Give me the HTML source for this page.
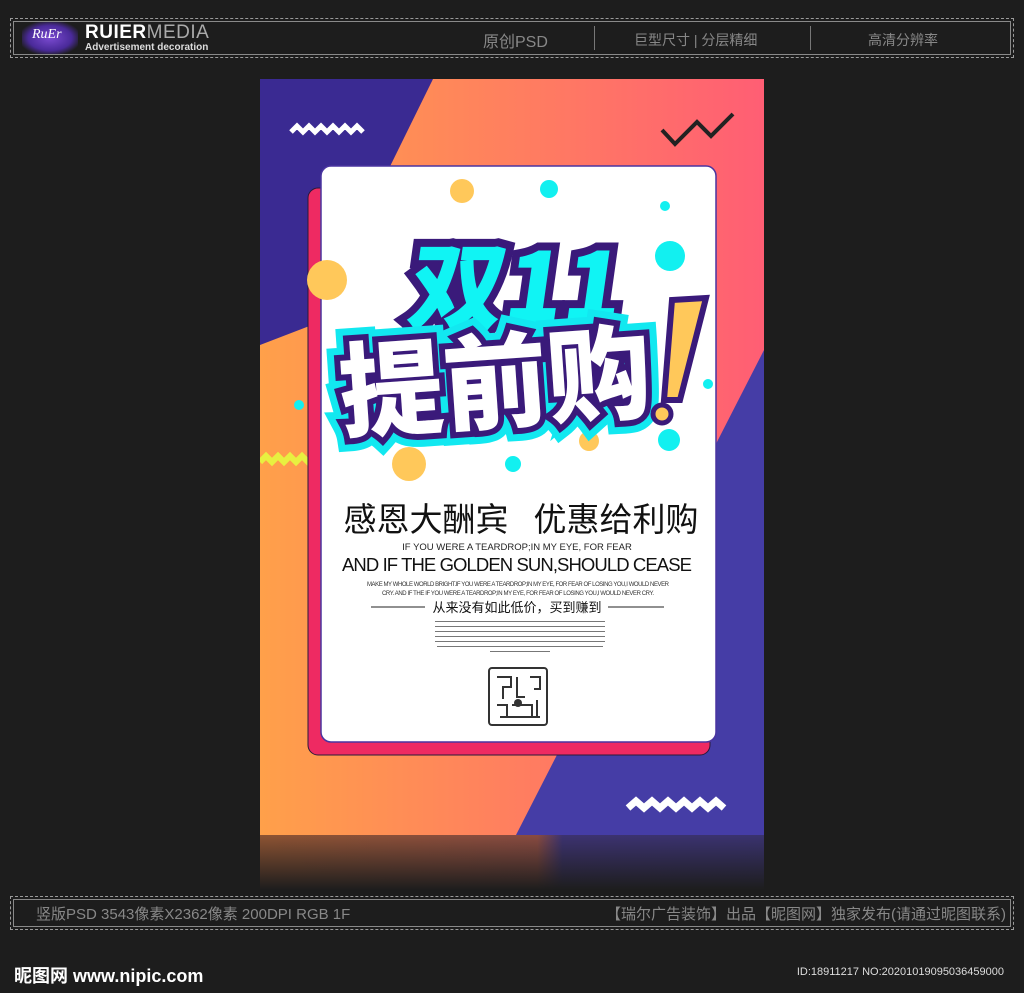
<!DOCTYPE html>
<html><head><meta charset="utf-8"><style>
*{margin:0;padding:0;box-sizing:border-box}
body{width:1024px;height:993px;background:#1d1d1d;position:relative;overflow:hidden;font-family:"Liberation Sans","Noto Sans CJK SC",sans-serif}
.bar{position:absolute;left:10px;width:1004px;border:1px dashed #9a9a9a}
.bar .in{position:absolute;inset:2px;border:1px solid #8a8a8a}
.abs{position:absolute}
</style></head><body>
<div class="bar" style="top:18px;height:40px"><div class="in"></div></div>
<div class="abs" style="left:22px;top:22px;width:56px;height:32px;background:radial-gradient(ellipse at 50% 50%,#7a4ad0 0%,#4a2a9a 55%,#1d1d1d 80%);border-radius:8px"></div>
<div class="abs" style="left:32px;top:27px;color:#fff;font:italic 14px 'Liberation Serif',serif">RuEr</div>
<div class="abs" style="left:85px;top:22px;color:#fff;font:bold 19px 'Liberation Sans',sans-serif;letter-spacing:0.5px">RUIER<span style="font-weight:normal;color:#aaa">MEDIA</span></div>
<div class="abs" style="left:85px;top:42px;color:#ddd;font:bold 10px 'Liberation Sans',sans-serif">Advertisement decoration</div>
<div class="abs" style="left:483px;top:28px;color:#888;font-size:16px">原创PSD</div>
<div class="abs" style="left:594px;top:26px;width:1px;height:24px;background:#777"></div>
<div class="abs" style="left:634px;top:30px;color:#888;font-size:14px">巨型尺寸 | 分层精细</div>
<div class="abs" style="left:810px;top:26px;width:1px;height:24px;background:#777"></div>
<div class="abs" style="left:868px;top:30px;color:#888;font-size:14px">高清分辨率</div>

<!-- reflection -->
<div class="abs" style="left:260px;top:835px;width:504px;height:55px;background:linear-gradient(90deg,#9a5a35,#955045 55%,#40357a 60%,#3d3578)"></div>
<div class="abs" style="left:260px;top:835px;width:504px;height:55px;background:linear-gradient(180deg,rgba(29,29,29,0.1),#1d1d1d)"></div>

<svg class="abs" style="left:260px;top:79px" width="504" height="756" viewBox="260 79 504 756">
<defs><linearGradient id="g" x1="0" x2="1" y1="0" y2="0"><stop offset="0" stop-color="#ffa04a"/><stop offset="1" stop-color="#ff5e74"/></linearGradient></defs>
<rect x="260" y="79" width="504" height="756" fill="url(#g)"/>
<polygon points="260,79 433,79 312,325 260,345" fill="#3a2a92"/>
<polygon points="764,350 764,835 516,835" fill="#453da6"/>
<path d="M291 132 l6-6 6 6 6-6 6 6 6-6 6 6 6-6 6 6 6-6 6 6 6-6 6 6" stroke="#fff" stroke-width="5" fill="none"/>
<path d="M628 808 l8-7 8 7 8-7 8 7 8-7 8 7 8-7 8 7 8-7 8 7 8-7 8 7" stroke="#fff" stroke-width="7" fill="none"/>
<path d="M662 130 l13 14 22-22 14 14 22-22" stroke="#222" stroke-width="4" fill="none"/>
<path d="M260 462 l6-6 6 6 6-6 6 6 6-6 6 6 6-6 6 6 6-6 6 6" stroke="#e8f040" stroke-width="6" fill="none"/>
<rect x="308" y="188" width="402" height="567" rx="10" fill="#ee2a62" stroke="#2a1a3a" stroke-width="1"/>
<rect x="321" y="166" width="395" height="576" rx="10" fill="#fff" stroke="#4a35a0" stroke-width="1.5"/>
<circle cx="462" cy="191" r="12" fill="#ffc85a"/><circle cx="549" cy="189" r="9" fill="#12f0f0"/>
<circle cx="665" cy="206" r="5" fill="#12f0f0"/><circle cx="670" cy="256" r="15" fill="#12f0f0"/>
<circle cx="327" cy="280" r="20" fill="#ffc85a"/><circle cx="299" cy="405" r="5" fill="#12f0f0"/>
<circle cx="708" cy="384" r="5" fill="#12f0f0"/><circle cx="669" cy="440" r="11" fill="#12f0f0"/>
<circle cx="589" cy="441" r="10" fill="#ffc85a"/><circle cx="409" cy="464" r="17" fill="#ffc85a"/>
<circle cx="513" cy="464" r="8" fill="#12f0f0"/>
<text x="515" y="322" text-anchor="middle" font-family="Noto Sans CJK SC,sans-serif" font-weight="900" font-size="96" fill="#10f4f4" stroke="#3a1a7a" stroke-width="16" paint-order="stroke" transform="skewX(-8) translate(42 0)">双11</text>
<text x="495" y="420" text-anchor="middle" font-family="Noto Sans CJK SC,sans-serif" font-weight="900" font-size="104" fill="#fff" stroke="#12e8f0" stroke-width="26" paint-order="stroke" transform="rotate(-4 495 380)">提前购</text>
<text x="495" y="420" text-anchor="middle" font-family="Noto Sans CJK SC,sans-serif" font-weight="900" font-size="104" fill="#fff" stroke="#3a1a7a" stroke-width="12" paint-order="stroke" transform="rotate(-4 495 380)">提前购</text>
<polygon points="672,300 706,298 680,400 664,400" fill="#ffc85a" stroke="#3a1a7a" stroke-width="6"/>
<circle cx="662" cy="414" r="9" fill="#ffc85a" stroke="#3a1a7a" stroke-width="5"/>
<text x="426" y="531" text-anchor="middle" font-family="Noto Sans CJK SC,sans-serif" font-size="33" fill="#111">感恩大酬宾</text>
<text x="616" y="531" text-anchor="middle" font-family="Noto Sans CJK SC,sans-serif" font-size="33" fill="#111">优惠给利购</text>
<text x="517" y="550" text-anchor="middle" font-family="Liberation Sans,sans-serif" font-size="9.5" fill="#222">IF YOU WERE A TEARDROP;IN MY EYE, FOR FEAR</text>
<text x="517" y="571" text-anchor="middle" font-family="Liberation Sans,sans-serif" font-size="18.5" fill="#111" textLength="350">AND IF THE GOLDEN SUN,SHOULD CEASE</text>
<text x="518" y="586" text-anchor="middle" font-family="Liberation Sans,sans-serif" font-size="6" fill="#333" textLength="302">MAKE MY WHOLE WORLD BRIGHT.IF YOU WERE A TEARDROP;IN MY EYE, FOR FEAR OF LOSING YOU,I WOULD NEVER</text>
<text x="518" y="595" text-anchor="middle" font-family="Liberation Sans,sans-serif" font-size="6" fill="#333" textLength="272">CRY. AND IF THE IF YOU WERE A TEARDROP;IN MY EYE, FOR FEAR OF LOSING YOU,I WOULD NEVER CRY.</text>
<line x1="371" y1="607" x2="425" y2="607" stroke="#222"/><line x1="608" y1="607" x2="664" y2="607" stroke="#222"/>
<text x="517" y="612" text-anchor="middle" font-family="Noto Sans CJK SC,sans-serif" font-size="13" fill="#111">从来没有如此低价，买到赚到</text>
<g fill="#777"><rect x="435" y="621" width="170" height="1"/><rect x="435" y="626" width="170" height="1"/><rect x="435" y="631" width="170" height="1"/><rect x="435" y="636" width="170" height="1"/><rect x="435" y="641" width="170" height="1"/><rect x="437" y="646" width="166" height="1"/><rect x="490" y="651" width="60" height="1"/></g>
<rect x="489" y="668" width="58" height="57" rx="3" fill="#fff" stroke="#333" stroke-width="2"/>
<path d="M497 677h14v10h-8v12M517 677v20h8M530 677h10v12h-6M497 705h10v12M512 705h20v12M537 700v17M500 717h40" stroke="#333" stroke-width="2" fill="none"/>
<circle cx="518" cy="703" r="4" fill="#333"/>
</svg>

<div class="bar" style="top:896px;height:34px"><div class="in"></div></div>
<div class="abs" style="left:36px;top:903px;color:#888;font-size:15px">竖版PSD 3543像素X2362像素 200DPI RGB 1F</div>
<div class="abs" style="right:18px;top:903px;color:#888;font-size:15px">【瑞尔广告装饰】出品【昵图网】独家发布(请通过昵图联系)</div>
<div class="abs" style="left:14px;top:962px;color:#fff;font-weight:bold;font-size:18px">昵图网 www.nipic.com</div>
<div class="abs" style="right:20px;top:966px;color:#ddd;font-size:11px">ID:18911217 NO:20201019095036459000</div>
</body></html>
